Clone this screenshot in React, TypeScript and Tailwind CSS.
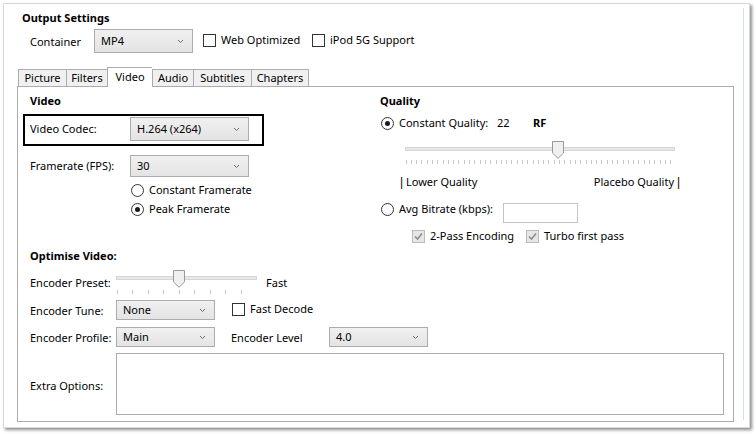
import React from "react";

function Chevron() {
  return (
    <svg width="7" height="5" viewBox="0 0 7 5" className="shrink-0">
      <path d="M1 1 L3.5 3.5 L6 1" fill="none" stroke="#6a6a6a" strokeWidth="1" />
    </svg>
  );
}

function Dropdown({ className, text }: { className: string; text: string }) {
  return (
    <div
      className={`flex items-center justify-between border border-[#acacac] bg-gradient-to-b from-[#f0f0f0] to-[#e4e4e4] pl-[6px] pr-[8px] ${className}`}
    >
      <span className="leading-[16px] -mt-[1px]">{text}</span>
      <Chevron />
    </div>
  );
}

function Checkbox({ label, disabled = false, checked = false }: { label: string; disabled?: boolean; checked?: boolean }) {
  return (
    <div className="flex items-center h-[16px]">
      <div
        className={`w-[13px] h-[13px] shrink-0 border flex items-center justify-center ${
          disabled ? "border-[#bcbcbc] bg-[#e6e6e6]" : "border-[#333333] bg-white"
        }`}
      >
        {checked && (
          <svg width="11" height="11" viewBox="0 0 11 11">
            <path d="M2 5.5 L4.5 8 L9 2.5" fill="none" stroke={disabled ? "#8d8d8d" : "#222"} strokeWidth="1.6" />
          </svg>
        )}
      </div>
      <span className="ml-[5px] leading-[16px]">{label}</span>
    </div>
  );
}

function Radio({ checked = false }: { checked?: boolean }) {
  return (
    <div className="w-[13px] h-[13px] shrink-0 rounded-full border border-[#333333] bg-white flex items-center justify-center">
      {checked && <div className="w-[5px] h-[5px] rounded-full bg-[#1a1a1a]" />}
    </div>
  );
}

function Thumb() {
  return (
    <svg width="12" height="18" viewBox="0 0 12 18">
      <path d="M0.5 0.5 H11.5 V12 L6 17.3 L0.5 12 Z" fill="#f0f0f0" stroke="#9a9a9a" strokeWidth="1" />
    </svg>
  );
}

function Ticks({ width, count }: { width: number; count: number }) {
  const xs: number[] = [];
  for (let i = 0; i < count; i++) xs.push(0.5 + ((width - 1) * i) / (count - 1));
  return (
    <svg width={width} height="4" viewBox={`0 0 ${width} 4`}>
      {xs.map((x, i) => (
        <line key={i} x1={Math.round(x) + 0.5} x2={Math.round(x) + 0.5} y1="0" y2="4" stroke="#c6c6c6" strokeWidth="1" />
      ))}
    </svg>
  );
}

export default function App() {
  const font = "font-['Noto_Sans',sans-serif]";
  const pipe = "font-['Liberation_Sans',sans-serif] text-[12px] text-black";
  return (
    <div className={`w-[756px] h-[434px] bg-white overflow-hidden pt-[3px] pl-[3px] text-[11px] whitespace-nowrap text-black ${font}`}>
      <div className="relative w-[747px] h-[425px] border border-[#d8d8d8] bg-white shadow-[2px_2px_3px_rgba(0,0,0,0.45)]">
        <div className="absolute left-[739px] top-[4px] w-[1px] h-[412px] bg-[#d3dee6]" />

        <div className="ml-[18px] mt-[6px] h-[16px] leading-[16px] font-bold">Output Settings</div>

        <div className="mt-[3px] ml-[26px] flex items-center h-[24px]">
          <div className="w-[64px] leading-[16px] mt-[1px]">Container</div>
          <Dropdown className="w-[99px] h-[24px]" text="MP4" />
          <div className="ml-[10px] w-[109px] -mt-[2px]">
            <Checkbox label="Web Optimized" />
          </div>
          <div className="-mt-[2px]">
            <Checkbox label="iPod 5G Support" />
          </div>
        </div>

        <div className="mt-[14px] ml-[14px] flex items-end h-[19px] relative z-10">
          <div className="w-[48px] h-[17px] border-l border-t border-[#acacac] bg-[#f0f0f0] flex items-center justify-center leading-[16px]">Picture</div>
          <div className="w-[41px] h-[17px] border-l border-t border-[#acacac] bg-[#f0f0f0] flex items-center justify-center leading-[16px]">Filters</div>
          <div className="w-[45px] h-[20px] -mb-[1px] border-l border-t border-[#acacac] bg-white flex items-start pt-[1px] justify-center leading-[16px]">Video</div>
          <div className="w-[41px] h-[17px] border-l border-t border-[#acacac] bg-[#f0f0f0] flex items-center justify-center leading-[16px]">Audio</div>
          <div className="w-[58px] h-[17px] border-l border-t border-[#acacac] bg-[#f0f0f0] flex items-center justify-center leading-[16px]">Subtitles</div>
          <div className="w-[58px] h-[17px] border-l border-t border-r border-[#acacac] bg-[#f0f0f0] flex items-center justify-center leading-[16px]">Chapters</div>
        </div>

        <div className="ml-[13px] w-[717px] h-[336px] border border-[#acacac] bg-white">
          <div className="flex h-[161px]">
            <div className="w-[362px] pl-[5px]">
              <div className="mt-[6px] ml-[7px] h-[16px] leading-[16px] font-bold">Video</div>
              <div className="mt-[5px] w-[241px] h-[32px] border-2 border-black flex items-start pt-[1px] pl-[5px]">
                <div className="w-[100px] h-[23px] flex items-center leading-[16px]">Video Codec:</div>
                <Dropdown className="w-[119px] h-[24px]" text="H.264 (x264)" />
              </div>
              <div className="mt-[9px] pl-[7px] flex items-center h-[22px]">
                <div className="w-[100px] leading-[16px]">Framerate (FPS):</div>
                <Dropdown className="w-[119px] h-[22px]" text="30" />
              </div>
              <div className="mt-[5px] ml-[108px] flex items-center h-[16px]">
                <Radio />
                <span className="ml-[5px] leading-[16px]">Constant Framerate</span>
              </div>
              <div className="mt-[3px] ml-[108px] flex items-center h-[16px]">
                <Radio checked />
                <span className="ml-[5px] leading-[16px]">Peak Framerate</span>
              </div>
            </div>

            <div className="flex-1">
              <div className="mt-[6px] h-[16px] leading-[16px] font-bold">Quality</div>
              <div className="mt-[6px] ml-[1px] flex items-center h-[16px]">
                <Radio checked />
                <span className="ml-[5px] w-[98px] leading-[16px]">Constant Quality:</span>
                <span className="w-[36px] leading-[16px]">22</span>
                <span className="font-bold leading-[16px]">RF</span>
              </div>
              <div className="mt-[10px] ml-[25px] relative w-[270px] h-[23px]">
                <div className="absolute left-0 top-[6px] w-[270px] h-[4px] border border-[#d6d6d6] bg-[#e7e9e9]" />
                <div className="absolute left-[147px] top-0">
                  <Thumb />
                </div>
                <div className="absolute left-0 top-[19px]">
                  <Ticks width={271} count={52} />
                </div>
              </div>
              <div className="mt-[10px] ml-[20px] w-[280px] flex justify-between h-[16px] leading-[16px]">
                <span><span className={pipe}>|</span> Lower Quality</span>
                <span>Placebo Quality <span className={pipe}>|</span></span>
              </div>
              <div className="mt-[11px] ml-[1px] flex items-start">
                <div className="flex items-center h-[16px]">
                  <Radio />
                  <span className="ml-[5px] w-[104px] leading-[16px]">Avg Bitrate (kbps):</span>
                </div>
                <div className="mt-[2px] w-[75px] h-[20px] border border-[#c4c4c4] bg-white" />
              </div>
              <div className="mt-[5px] ml-[32px] flex">
                <div className="w-[114px]">
                  <Checkbox label="2-Pass Encoding" disabled checked />
                </div>
                <Checkbox label="Turbo first pass" disabled checked />
              </div>
            </div>
          </div>

          <div className="pl-[12px]">
            <div className="h-[16px] leading-[16px] font-bold">Optimise Video:</div>
            <div className="mt-[6px] flex items-start h-[24px]">
              <div className="w-[86px] mt-[5px] leading-[16px]">Encoder Preset:</div>
              <div className="relative w-[141px] h-[24px]">
                <div className="absolute left-0 top-[6px] w-[141px] h-[4px] border border-[#d6d6d6] bg-[#e7e9e9]" />
                <div className="absolute left-[57px] top-0">
                  <Thumb />
                </div>
                <div className="absolute left-0 top-[20px]">
                  <Ticks width={141} count={10} />
                </div>
              </div>
              <div className="ml-[9px] mt-[5px] leading-[16px]">Fast</div>
            </div>
            <div className="mt-[6px] flex items-center h-[20px]">
              <div className="w-[86px] leading-[16px] mt-[2px]">Encoder Tune:</div>
              <Dropdown className="w-[99px] h-[20px]" text="None" />
              <div className="ml-[17px] -mt-[2px]">
                <Checkbox label="Fast Decode" />
              </div>
            </div>
            <div className="mt-[7px] flex items-center h-[20px]">
              <div className="w-[86px] leading-[16px] mt-[2px]">Encoder Profile:</div>
              <Dropdown className="w-[99px] h-[20px]" text="Main" />
              <div className="ml-[16px] w-[98px] leading-[16px] mt-[2px]">Encoder Level</div>
              <Dropdown className="w-[99px] h-[20px]" text="4.0" />
            </div>
            <div className="mt-[6px] flex items-center">
              <div className="w-[86px] leading-[16px] mt-[3px]">Extra Options:</div>
              <div className="w-[608px] h-[62px] border border-[#acacac] bg-white" />
            </div>
          </div>
        </div>
      </div>
    </div>
  );
}
